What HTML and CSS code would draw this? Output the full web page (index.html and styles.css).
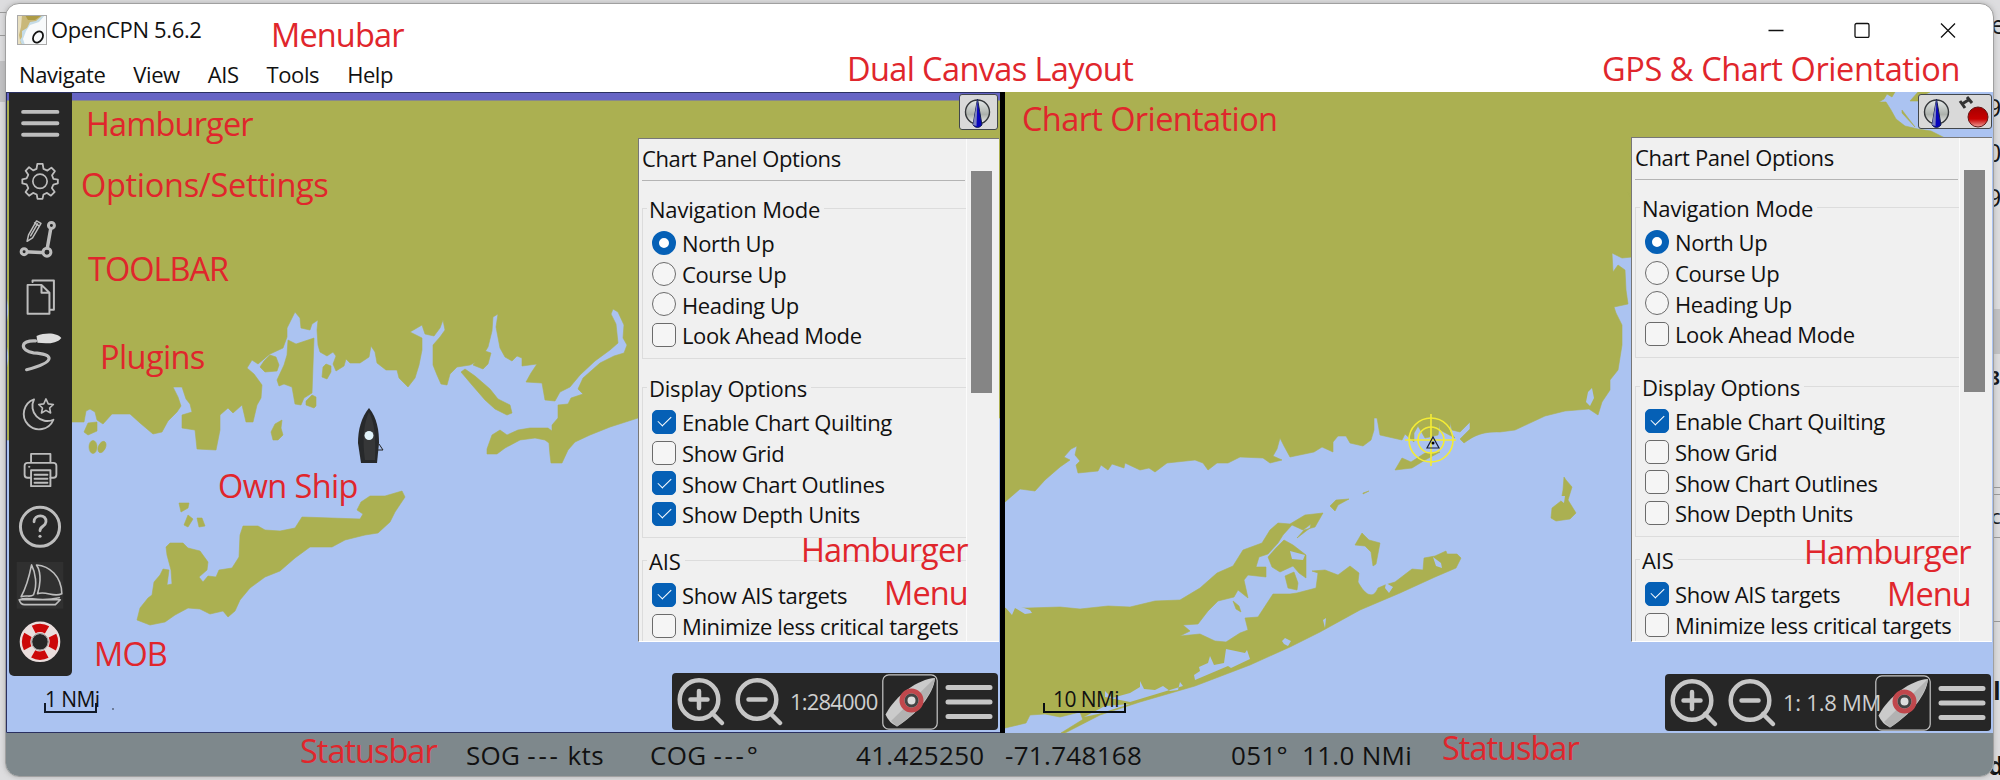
FILE: index.html
```html
<!DOCTYPE html>
<html lang="en">
<head>
<meta charset="utf-8">
<title>OpenCPN 5.6.2</title>
<link rel="stylesheet" href="styles.css">
</head>
<body>
<div class="desktop">
  <div class="behind" aria-hidden="true">
    <i class="rule r1"></i><i class="rule r2"></i><i class="shade"></i><i class="shade left"></i>
    <i class="rule r3"></i><i class="rule r4"></i><i class="rule r5"></i><i class="rule r6"></i>
    <span class="frag f1">e</span><span class="frag f2">9,</span><span class="frag f3">0,</span><span class="frag f4">9,</span>
    <span class="frag bold f5">8</span><span class="frag f6">c</span><span class="frag bold f7">l</span><span class="frag bold f8">d</span>
  </div>

  <main class="window">
    <header class="titlebar">
      <svg class="logo" viewBox="0 0 30 30"><rect width="30" height="30" fill="#f8fafb"/><path d="M0 0H28L22 7 13 10 9 16 6 24 8 30H0Z" fill="#c5dce8"/><path d="M0 0H26L19 6 13 7 10 13 5 16 5 22 3 25 5 30H0Z" fill="#c9b879"/><path d="M8 0H25L18 5 11 5Z" fill="#ad9b45"/><path d="M0 0H5L4 12 2 20 4 30H0Z" fill="#e8dfc0"/><ellipse cx="21" cy="22" rx="4.500" ry="6" fill="none" stroke="#111" stroke-width="1.800" transform="rotate(35 21 22)"/><rect x=".5" y=".5" width="29" height="29" fill="none" stroke="#aaa"/></svg>
      <span class="app-name">OpenCPN 5.6.2</span>
      <div class="controls">
        <svg viewBox="0 0 16 16"><path d="M.5 8.500H15.500"/></svg>
        <svg viewBox="0 0 16 16"><rect x="1" y="1.500" width="14" height="14" rx="1.500"/></svg>
        <svg viewBox="0 0 16 16"><path d="M1 1.500 15 15.500M15 1.500 1 15.500"/></svg>
      </div>
    </header>
    <nav class="menubar"><span>Navigate</span><span>View</span><span>AIS</span><span>Tools</span><span>Help</span></nav>

    <section class="canvases">
      <div class="canvas first">
        <svg class="chart" viewBox="6 92 994 641">
          <rect x="6" y="92" width="994" height="641" fill="#abc3f1"/>
          <g class="land">
            <path d="M6 100H1000V418H638L610 427 590 435 575 442 568 450 562 463H551L550 455 549 443 545 440 535 438 520 440 505 448 497 454H487L487 449 492 435 500 430 507 435 518 430 530 428 548 428 552 431 552 425 558 418V405L568 404 571 398 583 394 578 389 583 378 600 363 614 356 624 353 627 345 623 338 624 325 618 312 613 309 611 314 616 324 618 343 610 350 595 361 580 375 570 387 560 392 555 401 545 400 542 383 526 382 531 373 537 364 522 366V358L517 356 512 361 505 357 500 348 496 327 498 314 493 317 492 331 488 347 480 360 470 365 457 367 450 374 447 385 441 384 437 375 433 365V345L440 337 445 330 443 320 440 328 434 336 425 334 422 325 410 332 416 335 422 338V350L419 365 415 378 408 387 399 378 397 370 386 370 377 363 375 352 371 346 369 357 360 363 350 363 346 359 344 366 336 371 333 364 336 356 333 352 327 356 320 352 318 345 317 330 318 320 312 324 310 330 301 328 300 318 295 312 292 318 287 328V337L283 348 270 354 258 364 252 360 247 368 254 374 262 385 261 398 257 405 253 422H246L242 405 233 413 228 408 220 415V430L216 450 197 449 195 430 182 428V415L192 412 190 404 186 399 182 387H173L178 397 181 406 177 412 168 421 162 432 153 434 140 423 130 414H112L103 424 97 420 95 412 90 409 86 411 84 422H9V440H6V370C9 365 9 348 6 345V325C9 318 9 302 6 295Z"/>
            <path d="M260 367 264 361 270 355 276 357 279 365 277 371 265 372ZM288 340 296 344 314 338 312 393 304 398 301 405 295 404 292 387 284 384 279 386 277 380 284 365 287 355ZM306 401 312 395 316 397V406L314 408 306 405ZM323 367 326 364 331 366V372L327 379 322 377ZM271 432 275 424 282 420 281 428 283 435 278 440H273ZM473 365 485 351 491 353 488 364 483 369ZM461 372 465 369 475 376 490 389 498 399 510 405 512 413 507 415 495 409 485 400 472 385ZM84 432 88 423 97 422V431L88 435ZM179 503 189 503 188 508 181 512ZM184 525 188 515 193 519 188 527ZM197 518H202L205 526 199 527Z"/>
            <ellipse cx="93" cy="447" rx="4" ry="6.500"/><ellipse cx="102" cy="447" rx="3.500" ry="6" transform="rotate(25 102 447)"/>
            <path d="M137 620 140 608 148 598 152 595 154 582 160 575 163 569 169 570 167 585 172 584 171 570 167 555 166 547 170 543H183L188 548 200 551 208 562 207 570 199 577 203 582 208 576 216 577 219 570 232 568 239 557 240 535 243 526H258L265 530 280 531 295 528 302 517 360 519 363 514 357 510 361 502 370 496 385 496 402 491 405 497 395 512 390 522 378 533 365 535 345 540 332 547H310L295 558 280 571 265 577 250 588 240 600 235 611 228 617 223 611 210 614 200 609 188 608 175 615 165 622 150 625Z"/>
          </g>
          <rect x="6" y="92" width="994" height="8.500" fill="#6664c4"/><path d="M6 92.500H1000M6.500 92V732.500H1000" fill="none" stroke="#2a3060"/>
          <g class="ownship"><path d="M379 444 383 450H378" fill="none" stroke="#222"/><path d="M369 408C377 418 379 430 379 443L377 463H361L358 443C358 430 361 418 369 408Z" fill="#27292b"/><path d="M369 412C374 422 376 434 375 460H365C362 440 364 422 369 412Z" fill="#363738"/><circle cx="369" cy="435.500" r="4.500" fill="#e1f3fa"/></g>
          <path d="M45 703V712H96V703" fill="none" stroke="#111a28" stroke-width="2"/><circle cx="113" cy="709" r=".7"/>
        </svg>
        <span class="scale one">1 NMi</span>

        <aside class="toolbar">
          <svg viewBox="16.500 95 48 58"><path d="M23.500 102.500H58M23.500 114H58M23.500 125.500H58" stroke-width="4" transform="translate(0 9.500)"/></svg>
          <svg viewBox="16.500 152 48 58"><circle cx="40.500" cy="180.500" r="7.200" stroke-width="1.700"/><path stroke-width="1.800" d="M37.800 163H43.200L44 168 48 169.700 52 166.700 55.500 170.300 52.600 174.400 54 178 58.500 178.800V182.500L54 183.800 52.400 187.300 55.300 191.200 51.500 195 47.600 192.200 44 193.800 43 198.200H38L37.200 193.800 33.500 192.200 29.500 195 26 191.300 28.700 187.400 27 183.700 22.700 182.700V178.500L27 177.500 28.700 174 26 170 29.500 166.300 33.600 169.500 37 168Z"/></svg>
          <svg viewBox="16.500 210 48 58"><path d="M25 242 47 243 52 215" stroke-width="3.500" transform="translate(0 10)"/><g stroke-width="3" fill="#272727"><circle cx="24.500" cy="252" r="3"/><circle cx="47.500" cy="252.500" r="4"/><circle cx="52" cy="225.500" r="3"/></g><path d="M27.500 241.500 29 235 37 221 41.500 223.500 33 238ZM35 223 39.500 226M31 236 38 224" stroke-width="1.500"/></svg>
          <svg viewBox="16.500 267 48 58"><path d="M33 281V279.500H54.500V309H51" stroke-width="2"/><path d="M28 284H42L50 292V313H28ZM42 284V292H50" stroke-width="2"/></svg>
          <svg viewBox="16.500 325 48 58"><path d="M36 341C20 340 20 351 34 353C54 354 58 362 27 370" stroke-width="3.200"/><path d="M37 336C47 332 58 333 62 338C57 344 48 344 38 343Z" fill="#ddd" stroke="none"/></svg>
          <svg viewBox="16.500 383 48 58"><path d="M34.500 399.500A15.500 15.500 0 1 0 54 420A15 15 0 0 1 34.500 399.500Z" stroke-width="1.900"/><path d="M46.500 399 48.800 404 54 404.600 50.200 408.200 51.200 413.200 46.500 410.600 42 413.200 43 408.200 39.200 404.600 44.300 404Z" stroke-width="1.600"/></svg>
          <svg viewBox="16.500 440 48 58"><g stroke-width="1.900"><path d="M31.500 461V453H51V461M31.500 477H28Q25 477 25 474V465Q25 462 28 462H54Q57 462 57 465V474Q57 477 54 477H51"/><rect x="31.500" y="469.500" width="19.500" height="16"/><path d="M35 474H48M35 478H48M35 482H48"/></g><circle cx="29.500" cy="466" r=".6"/></svg>
          <svg viewBox="16.500 498 48 58"><circle cx="40.500" cy="527" r="19.700" stroke-width="3"/><path d="M34.500 522C34.500 514 47.500 514 46.500 522C46 527 40.500 526 40.500 531" stroke-width="2.800"/><circle cx="40.500" cy="536.500" r="1.600" fill="#bdbdbd" stroke="none"/></svg>
          <svg class="active" viewBox="16.500 555 48 58"><rect x="17" y="561" width="47" height="47" fill="#303030" stroke="none"/><g stroke-width="1.600"><path d="M32 564C30 574 27 586 21.500 596C27 594 31 597 34 594C38 584 36 572 32 564ZM37 564C43 573 40 587 38 593C47 590 54 597 62.500 593C62 575 50 565 37 564ZM19.500 599H61L56 604H25Q21 604 19.500 599ZM20 599C28 595 38 602 60 597"/></g></svg>
          <svg viewBox="16.500 613 48 58"><circle cx="40.500" cy="642" r="14.200" stroke="#eadedd" stroke-width="12.500"/><circle cx="40.500" cy="642" r="14" stroke="#cc0809" stroke-width="8.500" stroke-linecap="butt" stroke-dasharray="14 7.990" stroke-dashoffset="7"/><circle cx="40.500" cy="642" r="8.500" stroke="#999" stroke-width="1"/></svg>
        </aside>

        <div class="status-badge"><svg viewBox="0 0 38 34"><use href="#compass"/></svg></div>

        <aside class="panel">
          <div class="options">
            <h2>Chart Panel Options</h2>
            <div class="group"><h3>Navigation Mode</h3>
              <label><i class="radio on"></i>North Up</label><label><i class="radio"></i>Course Up</label><label><i class="radio"></i>Heading Up</label><label><i class="check"></i>Look Ahead Mode</label></div>
            <div class="group"><h3>Display Options</h3>
              <label><i class="check on"></i>Enable Chart Quilting</label><label><i class="check"></i>Show Grid</label><label><i class="check on"></i>Show Chart Outlines</label><label><i class="check on"></i>Show Depth Units</label></div>
            <div class="group last"><h3>AIS</h3>
              <label><i class="check on"></i>Show AIS targets</label><label><i class="check"></i>Minimize less critical targets</label></div>
          </div>
          <div class="track"><div class="thumb"></div></div>
        </aside>

        <div class="zoombar">
          <svg class="lens" viewBox="0 0 58 57"><circle cx="27" cy="26.500" r="19.300"/><path d="M40 40 50 50M18.500 26.500H35.500M27 18V35"/></svg>
          <svg class="lens" viewBox="0 0 58 57"><circle cx="27" cy="26.500" r="19.300"/><path d="M40 40 50 50M18.500 26.500H35.500"/></svg>
          <span>1:284000</span>
          <svg class="follow" viewBox="0 0 56 56"><use href="#follow"/></svg>
          <svg class="burger" viewBox="0 0 60 57"><path d="M10 14.500H52M10 29H52M10 43.500H52"/></svg>
        </div>
      </div>

      <div class="canvas second">
        <svg class="chart" viewBox="1005 92 988 641">
          <defs>
            <linearGradient id="disc" x2="0" y2="1"><stop stop-color="#e6eaea"/><stop offset=".6" stop-color="#acb1ac"/><stop offset="1" stop-color="#f1f1f1"/></linearGradient>
            <linearGradient id="lamp" x2="0" y2="1"><stop stop-color="#a50000"/><stop offset=".6" stop-color="#c80000"/><stop offset="1" stop-color="#eea09a"/></linearGradient>
            <g id="compass"><circle cx="17.500" cy="17" r="12" fill="url(#disc)" stroke="#34373a" stroke-width="1.400"/><path d="M17.500 4 22 30Q17.500 35 13 30Z" fill="#0804bd" stroke="#142050"/><path d="M17.500 4 16.500 31 13 30Z" fill="#7d83bc"/></g>
            <g id="follow"><rect x=".8" y=".8" width="54.400" height="54.400" rx="6" fill="none" stroke="#c8c8c8" stroke-width="1.200"/><path d="M53 4C36 5 14 21 3.500 40.500Q7 49 15 52.500C34 41 52 20 53 4Z" fill="#cbcbcb"/><path d="M53 4C50 22 32 41 15 52.500L9 47Z" fill="#b2b2b2"/><circle cx="29.500" cy="26.500" r="9.500" fill="#ddd" stroke="#c0474c" stroke-width="5"/><circle cx="29.500" cy="26.500" r="5.500" fill="#ddd" stroke="#444" stroke-width="3"/></g>
          </defs>
          <rect x="1005" y="92" width="988" height="641" fill="#abc3f1"/>
          <g class="land">
            <path d="M1005 92H1895L1892 97 1887 94 1884 99 1879 102 1886 102 1891 110 1896 119 1905 126 1918 129 1931 131 1945 138V200H1631V198L1628 192 1632 200V257L1622 258 1612 253 1613 272 1618 265 1625 270 1626 290 1628 304 1614 307 1616 313 1622 325V345L1618 370 1610 380V390L1602 402 1598 415 1589 409 1565 411 1545 416 1515 430 1500 432C1480 431 1471 438 1464 443L1460 439 1470 429V422L1460 432 1452 430 1450 422V432L1455 438 1440 430V423L1438 435 1425 438 1418 426 1414 433V442L1405 434 1402 440 1380 435 1377 418H1374V430L1371 440 1363 446 1350 443 1346 436 1338 436 1333 442V452L1322 447 1314 452 1290 457 1284 446 1280 438 1277 449 1273 456 1282 460 1270 463 1263 458 1240 457 1228 463 1217 463 1208 470 1203 463 1195 460 1167 463 1155 472 1149 468 1140 470 1125 463 1124 468 1112 464 1108 470 1101 465 1098 471 1078 473 1076 465 1080 461 1075 455 1077 446 1071 449 1064 457 1070 460 1060 467 1045 480 1035 491 1020 489 1005 502Z"/>
            <path d="M1005 608 1028 608 1060 607 1080 609 1108 606 1130 607 1155 601 1180 600 1200 588 1217 573 1233 566 1243 550 1262 543 1270 530 1278 523 1290 524 1305 515 1323 513 1315 527 1304 530 1297 538 1310 528 1311 524 1303 530 1292 525 1283 535 1278 543 1268 554 1259 557 1256 567H1266V577L1248 575 1244 580 1248 598 1238 590 1234 597 1218 601 1208 611 1198 624 1183 625 1190 631 1180 636 1200 634 1215 641 1226 642 1240 633 1248 630 1245 618 1258 617 1273 594 1290 594 1297 593 1316 588 1318 573 1312 571 1325 570 1338 575 1350 566 1359 573 1358 582C1365 595 1373 600 1378 588L1385 585 1395 582 1412 569 1423 570 1424 558 1435 556 1446 551 1447 554 1457 554 1461 558 1456 568 1435 577 1400 593 1360 610 1320 632 1290 647 1250 665 1195 686 1140 702 1100 715 1065 733H1061L1090 715 1083 720 1080 712 1060 717 1045 714 1030 715 1026 723 1005 728Z"/>
            <path d="M1268 557 1276 548 1284 540 1293 545 1306 555 1306 578 1299 573 1293 566 1280 572 1272 567ZM1285 576 1294 572 1298 583 1297 590 1288 588ZM1355 545 1362 533 1369 540 1380 543 1376 564 1373 566 1371 552 1365 546ZM1330 506 1336 500 1349 499 1338 505 1335 511ZM1551 518 1552 508 1561 501 1563 490 1564 477 1566 480 1572 487 1568 500 1576 513 1570 519 1556 521ZM1395 470 1402 458 1411 462 1425 453 1440 452 1425 460 1412 468ZM1363 494 1369 491 1363 493Z"/>
          </g>
          <g fill="#abc3f1">
            <path d="M1226 649 1245 653 1247 650 1250 659 1231 668 1228 666 1195 680 1194 675 1200 671 1199 667 1208 663 1210 656 1214 665 1224 663ZM1130 702 1105 697V691L1112 698 1130 693 1140 687V681L1144 689 1155 690 1163 686 1170 691 1178 690 1180 682 1183 686ZM1084 717 1105 706 1130 704 1098 714ZM1290 551 1305 555 1303 560 1292 559ZM1386 583 1393 587 1389 593 1385 588ZM1433 557 1441 563 1442 568 1436 566ZM1282 641 1285 638 1291 641 1288 646 1284 644ZM1323 620 1326 618 1325 628ZM1005 607 1015 605 1030 610 1032 613 1025 614 1015 608 1012 615ZM1588 392 1592 388 1594 398 1590 406 1586 402ZM1559 496 1565 496 1564 503 1560 500Z"/><path d="M1919 92V102L1939 111V100L1931 92Z"/>
          </g>
          <path class="land" d="M1233 601 1239 606 1241 612 1236 609ZM1902 110 1915 127 1902 113ZM1920 97V101H1910L1918 92H1930Z"/>
          <g fill="none" stroke="#f4ec35" stroke-width="1.600"><circle cx="1431" cy="440" r="22"/><circle cx="1431" cy="440" r="13"/><path d="M1431 414V466M1405 440H1456"/></g>
          <path d="M1433 437 1439 448H1427Z" fill="none" stroke="#171f3c" stroke-width="1.200"/><circle cx="1433" cy="443" r="1.500"/>
          <path d="M1044 703V712H1125V703" fill="none" stroke="#080d12" stroke-width="2"/>
        </svg>
        <span class="scale ten">10 NMi</span>

        <div class="status-badge wide"><svg viewBox="0 0 38 34"><use href="#compass"/></svg><svg viewBox="0 0 36 34"><path d="M3 6 8 13M10 2 15 8M5 9 13 4" stroke="#333" stroke-width="3"/><circle cx="21" cy="22" r="10" fill="url(#lamp)" stroke="#641615"/></svg></div>

        <aside class="panel">
          <div class="options">
            <h2>Chart Panel Options</h2>
            <div class="group"><h3>Navigation Mode</h3>
              <label><i class="radio on"></i>North Up</label><label><i class="radio"></i>Course Up</label><label><i class="radio"></i>Heading Up</label><label><i class="check"></i>Look Ahead Mode</label></div>
            <div class="group"><h3>Display Options</h3>
              <label><i class="check on"></i>Enable Chart Quilting</label><label><i class="check"></i>Show Grid</label><label><i class="check"></i>Show Chart Outlines</label><label><i class="check"></i>Show Depth Units</label></div>
            <div class="group last"><h3>AIS</h3>
              <label><i class="check on"></i>Show AIS targets</label><label><i class="check"></i>Minimize less critical targets</label></div>
          </div>
          <div class="track"><div class="thumb"></div></div>
        </aside>

        <div class="zoombar">
          <svg class="lens" viewBox="0 0 58 57"><circle cx="27" cy="26.500" r="19.300"/><path d="M40 40 50 50M18.500 26.500H35.500M27 18V35"/></svg>
          <svg class="lens" viewBox="0 0 58 57"><circle cx="27" cy="26.500" r="19.300"/><path d="M40 40 50 50M18.500 26.500H35.500"/></svg>
          <span>1: 1.8 MM</span>
          <svg class="follow" viewBox="0 0 56 56"><use href="#follow"/></svg>
          <svg class="burger" viewBox="0 0 60 57"><path d="M10 14.500H52M10 29H52M10 43.500H52"/></svg>
        </div>
      </div>
    </section>

    <footer class="statusbar"><span class="sog">SOG <em>---</em> kts</span><span class="cog">COG <em>---</em>°</span><span class="lat">41.425250</span><span class="lon">-71.748168</span><span class="brg">051°</span><span class="rng">11.0 NMi</span></footer>
  </main>

  <div class="notes">
    <b class="n1">Menubar</b><b class="n2">Dual Canvas Layout</b><b class="n3">GPS &amp; Chart Orientation</b>
    <b class="n4">Hamburger</b><b class="n5">Options/Settings</b><b class="n6">TOOLBAR</b><b class="n7">Plugins</b>
    <b class="n8">Own Ship</b><b class="n9">MOB</b><b class="n10">Statusbar</b><b class="n11">Chart Orientation</b>
    <b class="n12">Hamburger</b><b class="n13">Menu</b><b class="n14">Hamburger</b><b class="n15">Menu</b><b class="n16">Statusbar</b>
  </div>
</div>
</body>
</html>
```

FILE: styles.css
```css
* { box-sizing: border-box; }
body { margin: 0; font-family: "Open Sans", "Noto Sans", sans-serif; color: #111; }
.desktop { position: relative; width: 2000px; height: 780px; overflow: hidden; background: #dddddf; padding: 3px 6px 3px 5px; }
.window { position: relative; width: 1989px; height: 774px; border: 1px solid #a0a0a0; border-radius: 14px; overflow: hidden; background: #fff; box-shadow: 0 0 5px #8888; display: flex; flex-direction: column; }

/* Slivers of the window lying underneath */
.frag { position: absolute; left: 1991px; font-size: 25px; line-height: 30px; }
.frag.bold { font-weight: 700; left: 1993px; }
.f1 { top: 9px; } .f2, .f3, .f4 { left: 1987px; } .f2 { top: 92px; } .f3 { top: 137px; } .f4 { top: 182px; }
.frag.f5 { top: 363px; left: 1989px; font-size: 19px; } .f6 { top: 502px; font-size: 20px; } .f7 { top: 675px; } .frag.f8 { top: 750px; left: 1988px; }
.rule { position: absolute; left: 1990px; width: 10px; height: 1px; background: #999; }
.r1 { left: 0; top: 12px; } .r2 { left: 0; top: 35px; } .r3 { top: 487px; } .r4 { top: 494px; } .r5 { top: 537px; } .r6 { top: 621px; }
.shade { position: absolute; left: 1990px; top: 309px; width: 10px; height: 45px; background: #c2c2c4; }
.shade.left { left: 0; top: 61px; height: 41px; width: 6px; }

.titlebar { display: flex; align-items: center; height: 51px; padding: 0 37px 0 11px; flex: none; }
.logo { width: 30px; height: 30px; }
.app-name { font-size: 22px; letter-spacing: -.35px; margin: -2px 0 0 4px; }
.controls { margin-left: auto; display: flex; gap: 70px; }
.controls svg { width: 16px; height: 16px; fill: none; stroke: #111; stroke-width: 1.300; }
.menubar { display: flex; gap: 28px; height: 37px; padding-left: 13px; line-height: 38px; font-size: 22px; letter-spacing: -.42px; flex: none; }

.canvases { display: flex; height: 641px; flex: none; }
.canvas { position: relative; height: 641px; flex: none; }
.first { width: 994px; }
.second { width: 993px; border-left: 5px solid #000; }
.chart { display: block; width: 100%; height: 641px; }
.land { fill: #abb051; stroke: #abb051; stroke-width: .6; stroke-linejoin: round; }
.scale { position: absolute; font-size: 21px; line-height: 24px; letter-spacing: -.6px; }
.one { left: 39px; top: 595px; } .ten { left: 48px; top: 595px; }

.toolbar { position: absolute; left: 3px; top: 1px; width: 63px; height: 583px; padding: 2px 7px; background: #272727; border-radius: 0 0 5px 5px; display: flex; flex-direction: column; }
.toolbar svg { width: 48px; height: 57.600px; flex: none; fill: none; stroke: #bdbdbd; stroke-linecap: round; stroke-linejoin: round; }

.status-badge { position: absolute; left: 953px; top: 2px; width: 39px; height: 36px; border: 1px solid #41464b; border-radius: 3px; background: #d9d9d9; display: flex; }
.status-badge svg { width: 38px; height: 34px; flex: none; }
.status-badge.wide { left: 913px; top: 2px; width: 74px; height: 35px; }
.status-badge.wide svg + svg { width: 36px; }

.panel { position: absolute; left: 632px; top: 46px; width: 361px; height: 504px; overflow: hidden; background: #f0f0f0; border-top: 1px solid #777; border-left: 1px solid #777; border-bottom: 1px solid #fff; display: flex; font-size: 22px; letter-spacing: -.37px; }
.second .panel { left: 626px; top: 45px; height: 505px; }
.options { width: 328px; padding: 0 0 0 3px; border-right: 1px solid #fbfbfb; flex: none; }
.panel h2 { margin: 0 1px 0 0; height: 42px; border-bottom: 1px solid #b4b4b4; font: inherit; line-height: 39px; }
.group { margin: 27px 0 0; height: 151px; border: 1px solid #dcdcdc; border-right: 0; padding-left: 4px; }
.group + .group { margin-top: 28px; }
.group + .group.last { margin-top: 22px; }
.panel h3 { width: fit-content; margin: -15px 0 4px; padding: 0 4px 0 2px; font: inherit; line-height: 30px; letter-spacing: -.2px; background: #f0f0f0; }
.panel label { display: flex; align-items: center; height: 30.700px; line-height: 30px; padding: 0 0 0 5px; white-space: nowrap; }
.radio, .check { width: 24px; height: 24px; margin: -1px 6px 0 0; border: 1px solid #6b6b6b; background: #f5f5f5; flex: none; }
.radio { border-radius: 50%; }
.radio.on { border: 7px solid #0560b6; background: #fff; }
.check { border-radius: 5px; }
.check.on { background: #0560b6; border-color: #0560b6; display: grid; place-items: center; }
.check.on::after { content: ""; width: 12px; height: 6px; border-left: 1.500px solid #fff; border-bottom: 1.500px solid #fff; transform: translateY(-2px) rotate(-45deg); }
.track { width: 31px; padding: 32px 0 0 4px; }
.thumb { width: 21px; height: 222px; background: #858585; }

.zoombar { position: absolute; left: 666px; top: 581px; width: 326px; height: 57px; background: #262626; border-radius: 4px; display: flex; align-items: center; }
.second .zoombar { left: 660px; top: 582px; }
.zoombar svg { flex: none; }
.lens { width: 58px; height: 57px; fill: none; stroke: #c6c6c6; stroke-width: 4.500; stroke-linecap: round; }
.zoombar span { width: 94px; padding-left: 2px; margin-top: -1px; color: #cfcfcf; font-size: 22px; letter-spacing: -.8px; white-space: nowrap; }
.second .zoombar span { letter-spacing: -.25px; }
.follow { width: 56px; height: 56px; }
.burger { width: 60px; height: 57px; stroke: #c6c6c6; stroke-width: 5; stroke-linecap: round; }

.statusbar { position: relative; height: 45px; flex: none; display: flex; background: #7e888c; font-size: 26px; line-height: 44px; letter-spacing: .3px; padding-left: 460px; white-space: nowrap; }
.statusbar em { font-style: normal; letter-spacing: 2.700px; }
.sog { width: 184px; } .cog { width: 206px; } .lat { width: 149px; } .lon { width: 226px; } .brg { width: 71px; }

/* Callouts laid over the interface */
.notes b { position: absolute; color: #e0262c; font-weight: 400; font-size: 32.500px; line-height: 40px; letter-spacing: -.85px; white-space: nowrap; }
.n1 { left: 271px; top: 15px; } .n2 { left: 847px; top: 49px; } .n3 { left: 1602px; top: 49px; }
.n4 { left: 86px; top: 104px; } .n5 { left: 81px; top: 165px; } .n6 { left: 88px; top: 249px; }
.n7 { left: 100px; top: 337px; } .n8 { left: 218px; top: 466px; } .n9 { left: 94px; top: 634px; }
.n10 { left: 300px; top: 731px; } .n11 { left: 1022px; top: 99px; }
.n12 { left: 801px; top: 530px; } .n13 { left: 884px; top: 573px; }
.n14 { left: 1804px; top: 532px; } .n15 { left: 1887px; top: 574px; } .n16 { left: 1442px; top: 728px; }
.notes .n2 { letter-spacing: -.62px; } .notes .n3 { letter-spacing: -.4px; } .notes .n5 { letter-spacing: -.3px; }
.notes .n7, .notes .n8, .notes .n11 { letter-spacing: -.6px; } .notes .n6, .notes .n10, .notes .n16 { letter-spacing: -1px; }
```
